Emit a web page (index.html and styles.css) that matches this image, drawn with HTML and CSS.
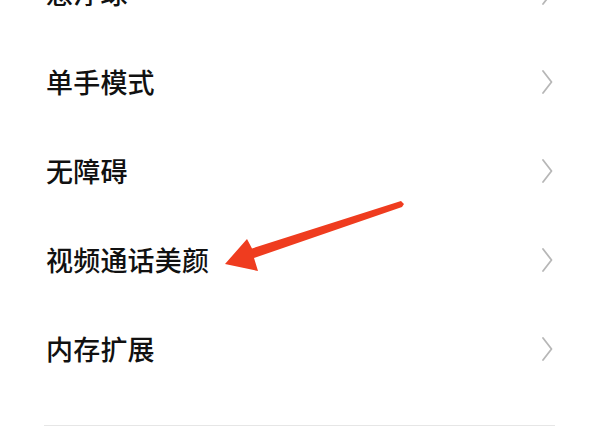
FILE: index.html
```html
<!DOCTYPE html>
<html lang="zh-CN">
<head>
<meta charset="utf-8">
<link rel="stylesheet" href="styles.css">
</head>
<body>
<div class="page">
  <ul class="list">
    <li class="row"><span class="label">悬浮球</span><svg class="chev" viewBox="0 0 12 24" width="12" height="24"><path d="M2 1 L10.5 12 L2 23"/></svg></li>
    <li class="row"><span class="label">单手模式</span><svg class="chev" viewBox="0 0 12 24" width="12" height="24"><path d="M2 1 L10.5 12 L2 23"/></svg></li>
    <li class="row"><span class="label">无障碍</span><svg class="chev" viewBox="0 0 12 24" width="12" height="24"><path d="M2 1 L10.5 12 L2 23"/></svg></li>
    <li class="row"><span class="label">视频通话美颜</span><svg class="chev" viewBox="0 0 12 24" width="12" height="24"><path d="M2 1 L10.5 12 L2 23"/></svg></li>
    <li class="row"><span class="label">内存扩展</span><svg class="chev" viewBox="0 0 12 24" width="12" height="24"><path d="M2 1 L10.5 12 L2 23"/></svg></li>
  </ul>
  <div class="divider"></div>
  <svg class="arrow" viewBox="0 0 600 427" width="600" height="427">
    <polygon points="225,264 247,239 252,248.5 401,201 404,204 402,207 254,258 258,271"/>
  </svg>
</div>
</body>
</html>
```

FILE: styles.css
```css
html, body {
  margin: 0;
  padding: 0;
  background: #ffffff;
}
.page {
  position: relative;
  width: 600px;
  height: 427px;
  overflow: hidden;
  font-family: "Noto Sans CJK SC", "Noto Sans", sans-serif;
}
.list {
  list-style: none;
  margin: -52px 0 0 0;
  padding: 0 46px 0 46px;
}
.row {
  height: 89px;
  display: flex;
  align-items: center;
  justify-content: space-between;
}
.label {
  font-size: 27px;
  font-weight: 500;
  color: #111111;
  line-height: 1;
  letter-spacing: 0.2px;
}
.chev {
  display: block;
  margin-right: 1px;
}
.chev path {
  fill: none;
  stroke: #b7b7b7;
  stroke-width: 1.8;
  stroke-linecap: round;
  stroke-linejoin: round;
}
.divider {
  margin: 32px 45px 0 44px;
  height: 1px;
  background: #e6e6e6;
}
.arrow {
  position: absolute;
  left: 0;
  top: 0;
}
.arrow polygon {
  fill: #ef3c1f;
}
```
